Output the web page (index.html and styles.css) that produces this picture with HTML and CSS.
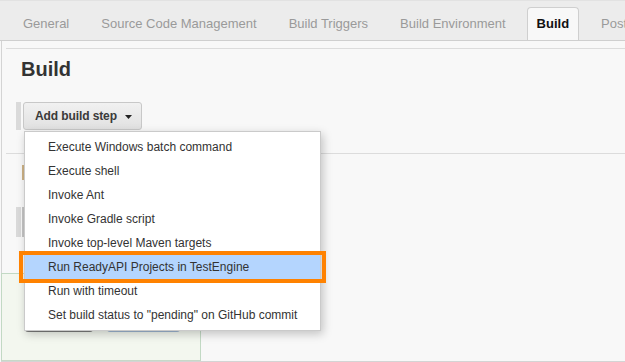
FILE: index.html
```html
<!DOCTYPE html>
<html>
<head>
<meta charset="utf-8">
<link rel="stylesheet" href="styles.css">
</head>
<body>
<div class="page">
  <nav class="tabs">
    <span class="tab">General</span>
    <span class="tab">Source Code Management</span>
    <span class="tab">Build Triggers</span>
    <span class="tab">Build Environment</span>
    <span class="tab active">Build</span>
    <span class="tab">Post-build Actions</span>
  </nav>
  <main class="main">
    <section class="sec sec-build">
      <h2 class="title">Build</h2>
      <div class="step-row">
        <span class="handle"></span>
        <button class="add-btn">Add build step <svg class="caret" width="7" height="4" viewBox="0 0 7 4"><polygon points="0,0 7,0 3.5,4" fill="#222"/></svg></button>
      </div>
    </section>
    <section class="sec sec-post">
      <span class="mark"></span>
      <div class="step-row row2">
        <span class="handle tall"></span>
        <span class="edge"></span>
      </div>
    </section>
    <div class="bottom">
      <button class="btn save"></button>
      <button class="btn apply"></button>
    </div>
  </main>
  <div class="menu">
    <div class="item">Execute Windows batch command</div>
    <div class="item">Execute shell</div>
    <div class="item">Invoke Ant</div>
    <div class="item">Invoke Gradle script</div>
    <div class="item">Invoke top-level Maven targets</div>
    <div class="item selected">Run ReadyAPI Projects in TestEngine</div>
    <div class="item">Run with timeout</div>
    <div class="item">Set build status to "pending" on GitHub commit</div>
  </div>
  <div class="focus"></div>
</div>
</body>
</html>
```

FILE: styles.css
```css
* { box-sizing: border-box; }
html, body { margin: 0; padding: 0; }
body {
  width: 625px;
  height: 362px;
  overflow: hidden;
  background: #f8f8f8;
  font-family: "Liberation Sans", Arial, sans-serif;
}
.page { position: relative; width: 625px; height: 362px; }

.tabs {
  display: flex;
  align-items: flex-end;
  gap: 12px;
  height: 41px;
  padding-left: 13px;
  background: #ececec;
  border-top: 1px solid #e2e2e2;
  border-bottom: 1px solid #cfcfcf;
  white-space: nowrap;
  overflow: hidden;
}
.tab {
  flex: none;
  height: 33px;
  margin-bottom: -1px;
  padding: 0 10px;
  line-height: 31px;
  font-size: 13px;
  color: #9a9a9a;
}
.tab.active {
  height: 34px;
  background: #f8f8f8;
  border: 1px solid #cfcfcf;
  border-bottom: none;
  border-radius: 4px 4px 0 0;
  padding: 0 9px;
  margin-left: -1px;
  color: #111;
  font-weight: bold;
}

.main {
  height: 321px;
  margin-left: 1px;
  border-left: 1px solid #d4d4d4;
  border-bottom: 1px solid #d4d4d4;
  display: flex;
  flex-direction: column;
}
.sec {
  margin-left: 4px;
  border-top: 1px solid #dcdcdc;
  padding-left: 10px;
}
.sec-build {
  margin-top: 7px;
  padding-bottom: 23px;
}
.title {
  margin: 8px 0 0 5px;
  font-size: 20px;
  line-height: 24px;
  font-weight: bold;
  color: #333;
}
.step-row {
  display: flex;
  align-items: stretch;
  gap: 2px;
  height: 28px;
  margin-top: 21px;
}
.handle {
  width: 5px;
  background: #dadada;
}
.add-btn {
  display: flex;
  align-items: center;
  gap: 8px;
  height: 28px;
  margin: 0;
  padding: 0 9px 0 11px;
  border: 1px solid #c8c8c8;
  border-radius: 3px;
  background: linear-gradient(#f1f1f1, #e1e1e1);
  font-family: "Liberation Sans", Arial, sans-serif;
  font-size: 12px;
  font-weight: bold;
  letter-spacing: -0.1px;
  color: #3a3a3a;
}
.caret { display: block; margin-top: 1px; }

.sec-post {
  display: flex;
  flex-direction: column;
  align-items: flex-start;
}
.mark {
  display: block;
  width: 2px;
  height: 15px;
  margin: 11px 0 0 6px;
  background: #cdb285;
}
.row2 {
  height: 30px;
  margin-top: 27px;
  gap: 1px;
}
.edge {
  width: 2px;
  background: #c4c4c4;
}

.bottom {
  display: flex;
  gap: 14px;
  width: 200px;
  height: 88px;
  margin-top: 36px;
  margin-left: -1px;
  padding: 32px 0 0 23px;
  background: #f3f7ef;
  border: 1px solid #c2d9c4;
  border-bottom-color: #c8d8c8;
}
.btn {
  height: 26px;
  margin: 0;
  padding: 0;
  border-radius: 3px;
}
.save {
  width: 68px;
  background: #d8d8d8;
  border: 1px solid #aaa;
  border-bottom: 2px solid #7d7d7d;
}
.apply {
  width: 73px;
  background: #dbe6f2;
  border: 1px solid #b7c8dc;
  border-bottom: 2px solid #9fb6d2;
}

.menu {
  position: absolute;
  left: 24px;
  top: 131px;
  width: 297px;
  padding: 3px 0;
  background: #fff;
  border: 1px solid #cacaca;
  box-shadow: 2px 3px 9px rgba(0, 0, 0, 0.22);
}
.item {
  height: 24px;
  line-height: 24px;
  padding-left: 23px;
  font-size: 12px;
  color: #333;
  white-space: nowrap;
}
.item.selected { background: #b4d5fe; }

.focus {
  position: absolute;
  left: 19px;
  top: 251px;
  width: 307px;
  height: 32px;
  border: 4px solid #ff8200;
}
```
